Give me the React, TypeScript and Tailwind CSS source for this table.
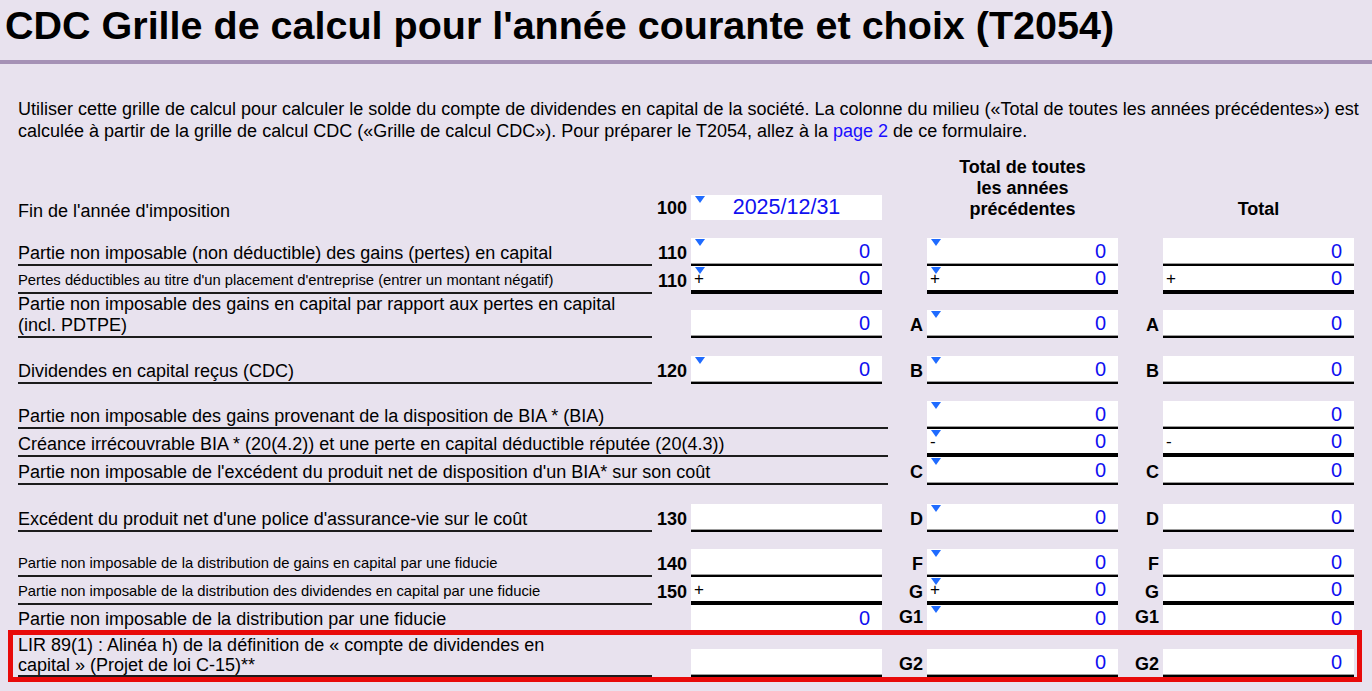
import React from "react";

type Cell = {
  v?: string;
  sign?: string;
  tri?: boolean;
  b?: "n" | "t" | "none";
} | null;

interface RowDef {
  label: React.ReactNode;
  small?: boolean;
  tight?: boolean;
  wide?: boolean;
  under?: boolean;
  code?: string;
  c1?: Cell;
  l1?: string;
  c2: Cell;
  l2?: string;
  c3: Cell;
  mt?: string;
}

function Tri() {
  return (
    <svg className="absolute left-[4px] top-[1px]" width="10" height="7" viewBox="0 0 10 7">
      <path d="M0 0H10L5 7Z" fill="#1f6bff" />
    </svg>
  );
}

function Box({ c }: { c?: Cell }) {
  if (!c) return <div className="w-[191px] shrink-0" />;
  const border =
    c.b === "t"
      ? "h-[28px] border-b-4 border-black"
      : c.b === "none"
      ? "h-[25px]"
      : "h-[28px] border-b-2 border-black shadow-[inset_0_-1px_0_#9c9c9c]";
  return (
    <div className={`relative w-[191px] shrink-0 bg-white flex items-center ${border}`}>
      {c.tri && <Tri />}
      {c.sign && <span className="pl-[3px] text-[17px] leading-none text-black">{c.sign}</span>}
      <span className="ml-auto pr-[12px] text-[20px] leading-none text-[#1010f0]">{c.v}</span>
    </div>
  );
}

function Row({ r }: { r: RowDef }) {
  const lab = r.small
    ? "text-[14.8px] leading-[24px]"
    : r.tight
    ? "text-[18px] leading-[20px]"
    : "text-[18px] leading-[21px]";
  const under = r.under === false ? "" : "border-b-2 border-[#1c1c1c]";
  const tag = "text-right pr-[4px] pb-[1px] font-bold text-[18px] leading-[24px] shrink-0";
  return (
    <div className={`flex items-end ${r.mt ?? ""}`}>
      <div className={`${r.wide ? "w-[870px]" : "w-[634px]"} shrink-0 ${under} ${lab}`}>{r.label}</div>
      {!r.wide && <div className={`w-[39px] ${tag}`}>{r.code}</div>}
      {!r.wide && <Box c={r.c1} />}
      <div className={`${r.wide ? "w-[39px]" : "w-[45px]"} ${tag}`}>{r.l1}</div>
      <Box c={r.c2} />
      <div className={`w-[45px] ${tag}`}>{r.l2}</div>
      <Box c={r.c3} />
    </div>
  );
}

const rows: RowDef[] = [
  {
    label: "Partie non imposable (non déductible) des gains (pertes) en capital",
    code: "110",
    c1: { v: "0", tri: true },
    c2: { v: "0", tri: true },
    c3: { v: "0" },
    mt: "mt-[18px]",
  },
  {
    label: "Pertes déductibles au titre d'un placement d'entreprise (entrer un montant négatif)",
    small: true,
    code: "110",
    c1: { v: "0", tri: true, sign: "+", b: "t" },
    c2: { v: "0", tri: true, sign: "+", b: "t" },
    c3: { v: "0", sign: "+", b: "t" },
  },
  {
    label: (
      <>
        Partie non imposable des gains en capital par rapport aux pertes en capital
        <br />
        (incl. PDTPE)
      </>
    ),
    c1: { v: "0" },
    l1: "A",
    c2: { v: "0", tri: true },
    l2: "A",
    c3: { v: "0" },
  },
  {
    label: "Dividendes en capital reçus (CDC)",
    code: "120",
    c1: { v: "0", tri: true },
    l1: "B",
    c2: { v: "0", tri: true },
    l2: "B",
    c3: { v: "0" },
    mt: "mt-[18px]",
  },
  {
    label: "Partie non imposable des gains provenant de la disposition de BIA * (BIA)",
    wide: true,
    c2: { v: "0", tri: true },
    c3: { v: "0" },
    mt: "mt-[17px]",
  },
  {
    label: "Créance irrécouvrable BIA * (20(4.2)) et une perte en capital déductible réputée (20(4.3))",
    wide: true,
    c2: { v: "0", tri: true, sign: "-", b: "t" },
    c3: { v: "0", sign: "-", b: "t" },
  },
  {
    label: "Partie non imposable de l'excédent du produit net de disposition d'un BIA* sur son coût",
    wide: true,
    l1: "C",
    c2: { v: "0", tri: true },
    l2: "C",
    c3: { v: "0" },
  },
  {
    label: "Excédent du produit net d'une police d'assurance-vie sur le coût",
    code: "130",
    c1: {},
    l1: "D",
    c2: { v: "0", tri: true },
    l2: "D",
    c3: { v: "0" },
    mt: "mt-[19px]",
  },
  {
    label: "Partie non imposable de la distribution de gains en capital par une fiducie",
    small: true,
    code: "140",
    c1: {},
    l1: "F",
    c2: { v: "0", tri: true },
    l2: "F",
    c3: { v: "0" },
    mt: "mt-[17px]",
  },
  {
    label: "Partie non imposable de la distribution des dividendes en capital par une fiducie",
    small: true,
    code: "150",
    c1: { sign: "+", b: "t" },
    l1: "G",
    c2: { v: "0", tri: true, sign: "+", b: "t" },
    l2: "G",
    c3: { v: "0", b: "t" },
  },
  {
    label: "Partie non imposable de la distribution par une fiducie",
    under: false,
    c1: { v: "0", b: "none" },
    l1: "G1",
    c2: { v: "0", tri: true, b: "none" },
    l2: "G1",
    c3: { v: "0", b: "none" },
  },
];

export default function App() {
  return (
    <div className="min-h-screen w-full bg-[#e8e2ee] text-black font-['Liberation_Sans',Arial,sans-serif] overflow-hidden">
      <div className="h-[60px] pl-[5px] pt-[2px]">
        <h1 className="text-[39.5px] leading-[46px] font-bold whitespace-nowrap">
          CDC Grille de calcul pour l'année courante et choix (T2054)
        </h1>
      </div>
      <div className="h-[4px] bg-[#a591b5]" />

      <div className="pl-[18px] pr-[10px]">
        <div className="mt-[34px] text-[18px] leading-[22px]">
          <div className="whitespace-nowrap">
            Utiliser cette grille de calcul pour calculer le solde du compte de dividendes en capital de la société. La colonne du milieu («Total de toutes les années précédentes») est
          </div>
          <div className="flex whitespace-pre">
            <span>calculée à partir de la grille de calcul CDC («Grille de calcul CDC»). Pour préparer le T2054, allez à la </span>
            <span className="text-[#1a0dff]">page 2</span>
            <span> de ce formulaire.</span>
          </div>
        </div>

        <div className="mt-[15px] flex items-end">
          <div className="w-[634px] shrink-0 text-[18px] leading-[21px] -mb-[2px]">Fin de l'année d'imposition</div>
          <div className="w-[39px] shrink-0 text-right pr-[4px] font-bold text-[18px] leading-[24px]">100</div>
          <div className="relative w-[191px] h-[25px] shrink-0 bg-white flex items-center">
            <Tri />
            <span className="mx-auto text-[21.5px] leading-none text-[#1010f0]">2025/12/31</span>
          </div>
          <div className="w-[45px] shrink-0" />
          <div className="w-[191px] shrink-0 text-center font-bold text-[18px] leading-[21px]">
            Total de toutes
            <br />
            les années
            <br />
            précédentes
          </div>
          <div className="w-[45px] shrink-0" />
          <div className="w-[191px] shrink-0 text-center font-bold text-[18px] leading-[21px]">Total</div>
        </div>

        {rows.map((r, i) => (
          <Row key={i} r={r} />
        ))}

        <div className="-ml-[10px] w-[1354px] border-[5px] border-[#e80a0a] pl-[5px]">
          <Row
            r={{
              label: (
                <>
                  LIR 89(1) : Alinéa h) de la définition de « compte de dividendes en
                  <br />
                  capital » (Projet de loi C-15)**
                </>
              ),
              tight: true,
              c1: {},
              l1: "G2",
              c2: { v: "0" },
              l2: "G2",
              c3: { v: "0" },
            }}
          />
        </div>
      </div>
    </div>
  );
}
